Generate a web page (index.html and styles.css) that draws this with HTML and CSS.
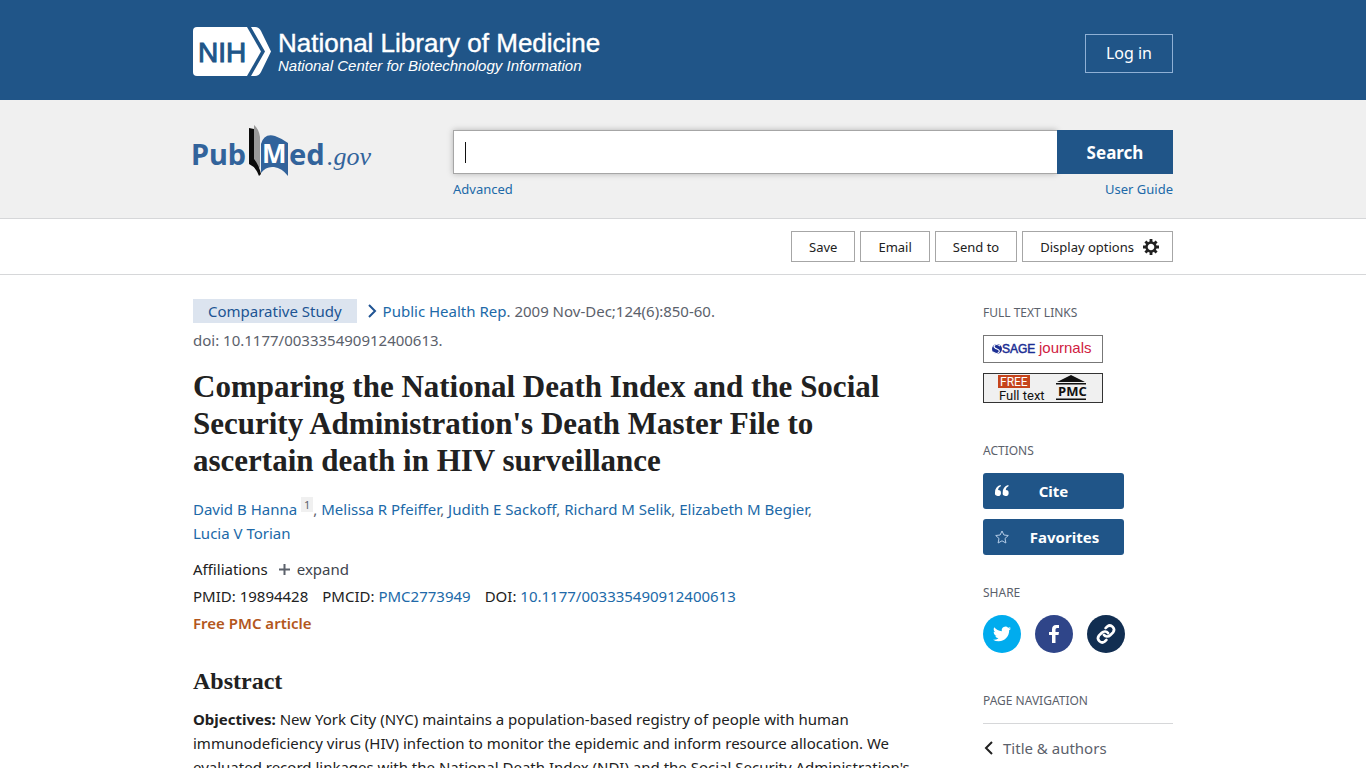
FILE: index.html
```
<!DOCTYPE html>
<html lang="en">
<head>
<meta charset="utf-8">
<meta name="viewport" content="width=device-width, initial-scale=1">
<title>PubMed</title>
<link rel="stylesheet" href="styles.css">
</head>
<body>
<header class="site-header">
  <div class="container site-header-row">
    <a class="nih-logo" href="#" aria-label="National Library of Medicine">
      <svg width="420" height="52" viewBox="0 1 420 52">
        <path d="M4 1H54L68 25.500L54 50H4Q0 50 0 46V5Q0 1 4 1Z" fill="#fff"/>
        <path d="M58 1H62Q66 1 68 5L78 25.500L68 46Q66 50 62 50H58L72 25.500Z" fill="#fff"/>
        <text class="nih-text" x="5" y="36">NIH</text>
        <text class="nlm-text" x="85" y="26">National Library of Medicine</text>
        <text class="ncbi-text" x="85" y="45">National Center for Biotechnology Information</text>
      </svg>
    </a>
    <button class="login" type="button">Log in</button>
  </div>
</header>

<section class="search-area">
  <div class="container search-row">
    <a class="pubmed-logo" href="#" aria-label="PubMed.gov">
      <svg width="190" height="56" viewBox="0 0 190 56">
        <text class="pm-bold" x="-2" y="43">Pub</text>
        <path d="M61 3Q66 7 67 15V45L64 50L61 42Z" fill="#999"/>
        <path d="M56 6L61 7V37Q66 43 68 52L66 54Q64 46 56 42Z" fill="#0b0b0b"/>
        <path d="M68 22Q71 11 82 14Q90 17 95 21V54Q89 46 81 45Q73 44 68 51Z" fill="#32639b"/>
        <text class="pm-m" x="69" y="41">M</text>
        <text class="pm-bold" x="96" y="43">ed</text>
        <text class="pm-gov" x="134" y="43">.gov</text>
      </svg>
    </a>
    <form class="search-form">
      <div class="search-controls">
        <input class="search-input" type="text" aria-label="Search PubMed">
        <button class="search-button" type="button">Search</button>
      </div>
      <div class="search-links"><a href="#">Advanced</a><a href="#">User Guide</a></div>
    </form>
  </div>
</section>

<section class="toolbar">
  <div class="container toolbar-row">
    <button type="button">Save</button>
    <button type="button">Email</button>
    <button type="button">Send to</button>
    <button type="button" class="with-icon">Display options
      <svg width="16" height="16" viewBox="-8 -8 16 16">
        <circle r="4.500" fill="none" stroke="#212121" stroke-width="2.400"/>
        <path d="M0-5V-8M0 5V8M-5 0H-8M5 0H8M-3.500-3.500L-5.600-5.600M3.500-3.500L5.600-5.600M-3.500 3.500L-5.600 5.600M3.500 3.500L5.600 5.600" stroke="#212121" stroke-width="2.800"/>
      </svg>
    </button>
  </div>
</section>

<div class="container page">
  <main class="article">
    <div class="citation">
      <span class="pub-type">Comparative Study</span>
      <svg class="chevron" width="8" height="12" viewBox="0 0 8 12"><path d="M1 0L7 6L1 12" fill="none" stroke="#205493" stroke-width="2"/></svg>
      <span><a href="#">Public Health Rep</a>. 2009 Nov-Dec;124(6):850-60.</span>
    </div>
    <div class="doi">doi: 10.1177/003335490912400613.</div>
    <h1>Comparing the National Death Index and the Social Security Administration's Death Master File to ascertain death in HIV surveillance</h1>
    <div class="authors"><a href="#">David B Hanna</a> <sup><a href="#">1</a></sup>, <a href="#">Melissa R Pfeiffer</a>, <a href="#">Judith E Sackoff</a>, <a href="#">Richard M Selik</a>, <a href="#">Elizabeth M Begier</a>, <a class="name" href="#">Lucia V Torian</a></div>
    <div class="affiliations">Affiliations
      <button type="button" class="expand"><svg width="11" height="11" viewBox="0 0 11 11"><path d="M5.500 0V11M0 5.500H11" stroke="#5b616b" stroke-width="2"/></svg>expand</button>
    </div>
    <div class="ids">
      <span>PMID: 19894428</span>
      <span>PMCID: <a href="#">PMC2773949</a></span>
      <span>DOI: <a href="#">10.1177/003335490912400613</a></span>
    </div>
    <div class="free">Free PMC article</div>
    <h2>Abstract</h2>
    <p class="abstract"><strong>Objectives:</strong> New York City (NYC) maintains a population-based registry of people with human immunodeficiency virus (HIV) infection to monitor the epidemic and inform resource allocation. We evaluated record linkages with the National Death Index (NDI) and the Social Security Administration's</p>
  </main>

  <aside class="sidebar">
    <section class="side-links">
      <h3>Full text links</h3>
      <a class="link-badge" href="#" aria-label="SAGE journals">
        <svg width="120" height="28" viewBox="0 0 120 28">
          <rect x=".5" y=".5" width="119" height="27" fill="#fff" stroke="#777"/>
          <circle cx="14" cy="14" r="5" fill="#1c2f94"/>
          <path d="M17 11Q13 8 11 11Q11 13 14 14Q17 15 16 17Q14 20 10 17" fill="none" stroke="#fff" stroke-width="1.200"/>
          <text class="sage" x="19" y="18">SAGE</text>
          <text class="journals" x="56" y="18">journals</text>
        </svg>
      </a>
      <a class="link-badge" href="#" aria-label="Free full text PMC">
        <svg width="120" height="30" viewBox="0 0 120 30">
          <rect x=".5" y=".5" width="119" height="29" fill="#f0f0f0" stroke="#333"/>
          <rect x="15" y="2" width="32" height="13" fill="#c5441c"/>
          <text class="badge-free" x="17" y="13">FREE</text>
          <text class="badge-full" x="16" y="27">Full text</text>
          <path d="M88 2L102 9H74ZM73 10H103V11.500H73ZM73 25.500H103V27H73Z" fill="#111"/>
          <text class="badge-pmc" x="75" y="23">PMC</text>
        </svg>
      </a>
    </section>
    <section class="side-actions">
      <h3>Actions</h3>
      <button type="button" class="action cite">
        <svg width="14" height="12" viewBox="0 0 14 12"><path d="M5.500 0Q0 1.500 0 7.500A3 3 0 1 0 3 5Q3 2.500 6 1Z" fill="#fff"/><path d="M13.200 0Q7.700 1.500 7.700 7.500A3 3 0 1 0 10.700 5Q10.700 2.500 13.700 1Z" fill="#fff"/></svg>
        <span>Cite</span>
      </button>
      <button type="button" class="action favorites">
        <svg width="14" height="14" viewBox="0 0 14 14"><path d="M7 1L8.900 5L13.300 5.500L10 8.500L10.900 13L7 10.800L3.100 13L4 8.500L.7 5.500L5.100 5Z" fill="none" stroke="#b5cde8"/></svg>
        <span>Favorites</span>
      </button>
    </section>
    <section class="side-share">
      <h3>Share</h3>
      <div class="share-row">
        <a class="share twitter" href="#" aria-label="Twitter"><svg width="18" height="18" viewBox="0 0 24 24"><path fill="#fff" d="M23.950 4.570a10 10 0 0 1-2.820.770 4.960 4.960 0 0 0 2.160-2.720c-.950.550-2 .950-3.130 1.180a4.920 4.920 0 0 0-8.380 4.480C7.690 8.090 4.070 6.130 1.640 3.160a4.820 4.820 0 0 0-.670 2.480c0 1.710.870 3.210 2.190 4.100a4.900 4.900 0 0 1-2.230-.620v.060a4.920 4.920 0 0 0 3.950 4.830 5 5 0 0 1-2.210.080 4.940 4.940 0 0 0 4.600 3.420A9.870 9.870 0 0 1 0 19.540a13.990 13.990 0 0 0 7.550 2.210c9.050 0 14-7.500 14-13.990 0-.210 0-.420-.020-.630a9.940 9.940 0 0 0 2.460-2.550z"/></svg></a>
        <a class="share facebook" href="#" aria-label="Facebook"><svg width="18" height="18" viewBox="0 0 18 18"><path fill="#fff" d="M7 18V10H4V7H7V4.500Q7 0 11 0H14V3H12Q10.500 3 10.500 4.500V7H14L13.500 10H10.500V18Z"/></svg></a>
        <a class="share permalink" href="#" aria-label="Permalink"><svg width="20" height="20" viewBox="0 0 24 24"><g fill="none" stroke="#fff" stroke-width="3.200" stroke-linecap="round"><path d="M9.500 13a5 5 0 0 0 7.500.500l3.500-3.500a5 5 0 0 0-7-7l-2 2"/><path d="M14.500 11a5 5 0 0 0-7.500-.500l-3.500 3.500a5 5 0 0 0 7 7l2-2"/></g></svg></a>
      </div>
    </section>
    <nav class="side-nav">
      <h3>Page navigation</h3>
      <a href="#"><svg width="8" height="12" viewBox="0 0 8 12"><path d="M7 0L1 6L7 12" fill="none" stroke="#212121" stroke-width="2"/></svg>Title &amp; authors</a>
    </nav>
  </aside>
</div>
</body>
</html>
```
FILE: styles.css
```
* { box-sizing: border-box; }
body {
  margin: 0;
  background: #fff;
  color: #212121;
  font: 15px/24px "Noto Sans", "Open Sans", sans-serif;
}
a { color: #2069a8; text-decoration: none; }
button { font-family: inherit; cursor: pointer; }
svg { display: block; flex: none; overflow: visible; }
.container { width: 100%; max-width: 1020px; margin: 0 auto; padding: 0 20px; }

.site-header { background: #205588; padding: 27px 0 21px; }
.site-header-row { display: flex; justify-content: space-between; align-items: center; }
.nih-text { font: 28px "Liberation Sans", sans-serif; fill: #205588; stroke: #205588; stroke-width: 1px; }
.nlm-text { font: 26px "Liberation Sans", sans-serif; fill: #fff; stroke: #fff; stroke-width: .4px; }
.ncbi-text { font: italic 15px "Liberation Sans", sans-serif; fill: #fff; }
.login {
  height: 39px;
  padding: 0 20px;
  border: 1px solid #8fb0d5;
  background: transparent;
  color: #fff;
  font-size: 16px;
}

.search-area { background: #f0f0f0; border-bottom: 1px solid #d6d7d9; padding: 22px 0 17px; }
.search-row { display: flex; align-items: flex-start; }
.pubmed-logo { flex: 0 0 260px; }
.pm-bold { font: bold 29px "Noto Sans", sans-serif; fill: #32639b; }
.pm-m { font: bold 26px "Noto Sans", sans-serif; fill: #fff; }
.pm-gov { font: italic 26px "Liberation Serif", serif; fill: #32639b; }
.search-form { flex: 1; padding-top: 8px; }
.search-controls { display: flex; }
.search-input {
  flex: 1;
  min-width: 0;
  height: 44px;
  border: 1px solid #a6a6a6;
  border-right: 0;
  padding: 0 12px;
  background: linear-gradient(#111, #111) 11px 11px / 1px 21px no-repeat #fff;
  box-shadow: 0 0 6px rgba(0, 0, 0, .25);
  font: inherit;
  outline: 0;
}
.search-button {
  width: 116px;
  border: 0;
  background: #205588;
  color: #fff;
  font-size: 17px;
  font-weight: 700;
  position: relative;
}
.search-links { display: flex; justify-content: space-between; padding-top: 3px; font-size: 13px; }

.toolbar { border-bottom: 1px solid #d6d7d9; padding: 12px 0; }
.toolbar-row { display: flex; justify-content: flex-end; gap: 5px; }
.toolbar button {
  height: 31px;
  padding: 0 17px;
  border: 1px solid #a6a6a6;
  background: #fff;
  color: #212121;
  font-size: 13px;
}
.toolbar .with-icon { display: flex; align-items: center; gap: 9px; padding-right: 13px; }

.page { display: grid; grid-template-columns: minmax(0, 1fr) 190px; gap: 66px; padding-top: 24px; }
.citation { display: flex; align-items: center; color: #5b616b; }
.pub-type { background: #dce4ef; color: #205493; padding: 0 15px; }
.chevron { margin: 0 7px 0 11px; }
.doi { margin-top: 5px; color: #5b616b; }
h1, h2 { font-family: "Liberation Serif", serif; font-weight: 700; }
h1 { margin: 16px 0 18px; font-size: 31px; line-height: 37px; }
.authors { padding-right: 20px; color: #5b616b; }
.name { display: inline-block; }
.authors sup { font-size: 11px; line-height: 0; vertical-align: 6px; }
.authors sup a { background: #f0f0f0; color: #5b616b; padding: 0 3px; }
.affiliations { display: flex; gap: 11px; margin-top: 12px; }
.expand { display: flex; align-items: center; gap: 7px; border: 0; padding: 0; background: none; color: #3e444c; font-size: 15px; }
.ids { display: flex; gap: 14px; margin-top: 3px; }
.free { margin-top: 3px; color: #b3571c; font-weight: 600; }
h2 { margin: 32px 0 12px; font-size: 24px; line-height: 28px; }
.abstract { margin: 0; }

.sidebar h3 { margin: 0; color: #5b616b; font-size: 12px; line-height: 16px; font-weight: 400; text-transform: uppercase; }
.side-links { display: grid; gap: 10px; padding-top: 6px; }
.side-links h3 { margin-bottom: 4px; }
.link-badge { width: 120px; }
.sage { font: 12px "Liberation Sans", sans-serif; fill: #1c2f94; stroke: #1c2f94; stroke-width: .5px; }
.journals { font: 15px "Liberation Sans", sans-serif; fill: #d0213f; }
.badge-free { font: 12px Roboto, sans-serif; fill: #fff; }
.badge-full { font: 13px Roboto, sans-serif; fill: #111; }
.badge-pmc { font: bold 13px "Open Sans", sans-serif; fill: #111; }
.side-actions { display: grid; gap: 10px; margin-top: 40px; }
.side-actions h3 { margin-bottom: 4px; }
.action {
  display: grid;
  grid-template-columns: 14px 1fr;
  align-items: center;
  width: 141px;
  height: 36px;
  padding: 0 12px;
  border: 0;
  border-radius: 3px;
  background: #205588;
  color: #fff;
  font-size: 15px;
  font-weight: 700;
}
.cite span { padding-right: 14px; }
.favorites span { padding-left: 8px; }
.side-share { margin-top: 30px; }
.share-row { display: flex; gap: 14px; margin-top: 14px; }
.share { display: grid; place-items: center; width: 38px; height: 38px; border-radius: 50%; }
.twitter { background: #00acee; }
.facebook { background: #2f4589; }
.permalink { background: #112e51; }
.side-nav { margin-top: 40px; }
.side-nav a { display: flex; align-items: center; gap: 10px; margin-top: 14px; padding: 12px 0 12px 2px; border-top: 1px solid #d6d7d9; color: #5b616b; }
```
